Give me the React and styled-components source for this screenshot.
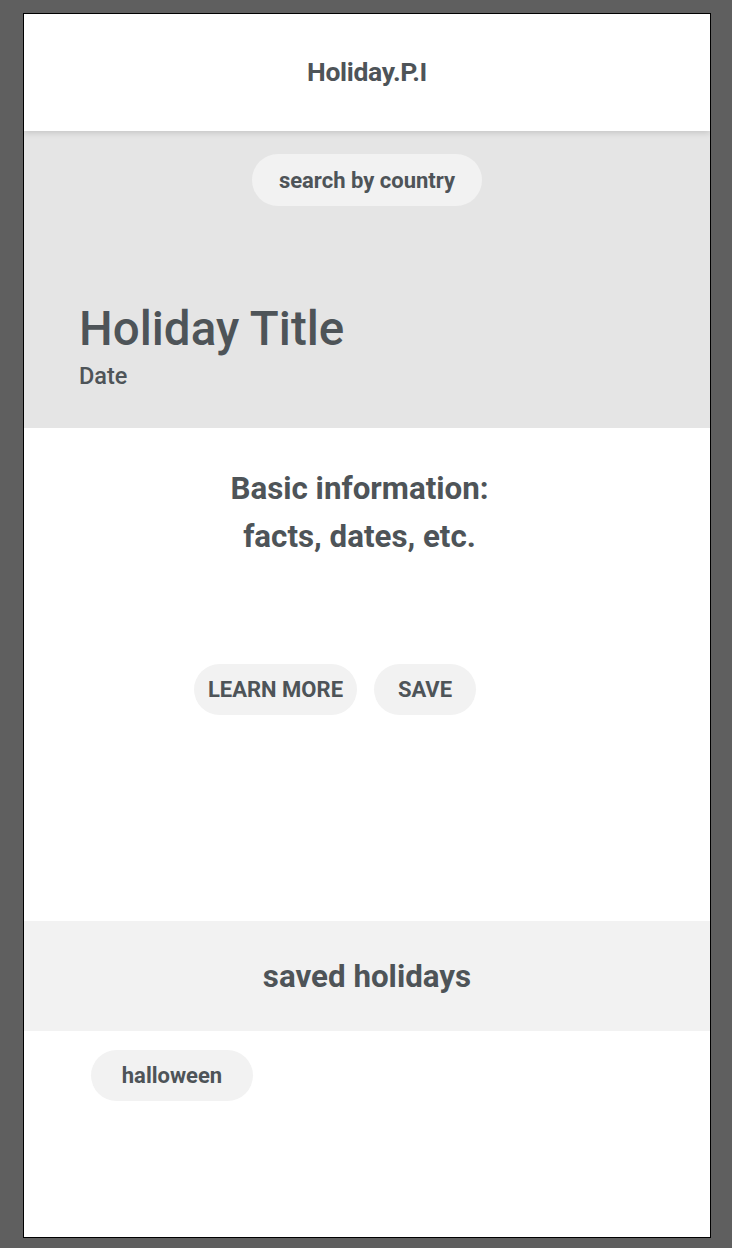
import styled, { createGlobalStyle } from "styled-components";

const GlobalStyle = createGlobalStyle`
  html, body {
    margin: 0;
    padding: 0;
    background: #5f5f5f;
  }
  body {
    font-family: Roboto, "Noto Sans", sans-serif;
    color: #4e5458;
  }
`;

export default function App() {
  return (
    <>
      <GlobalStyle />
      <Frame>
        <Header>
          <Logo>Holiday.P.I</Logo>
        </Header>
        <Hero>
          <Pill $w={230} $h={52}>search by country</Pill>
          <TitleBlock>
            <Title>Holiday Title</Title>
            <DateText>Date</DateText>
          </TitleBlock>
        </Hero>
        <Info>
          <InfoText>
            Basic information:
            <br />
            facts, dates, etc.
          </InfoText>
          <Actions>
            <ActionButton $w={163}>LEARN MORE</ActionButton>
            <ActionButton $w={102}>SAVE</ActionButton>
          </Actions>
        </Info>
        <SavedBand>
          <SavedTitle>saved holidays</SavedTitle>
        </SavedBand>
        <SavedList>
          <Pill $w={162} $h={51}>halloween</Pill>
        </SavedList>
      </Frame>
    </>
  );
}

const Frame = styled.div`
  box-sizing: border-box;
  width: 688px;
  height: 1225px;
  margin: 13px 0 0 23px;
  border: 1px solid #000;
  background: #fff;
  display: flex;
  flex-direction: column;
  overflow: hidden;
`;

const Header = styled.header`
  position: relative;
  z-index: 1;
  height: 117px;
  display: flex;
  align-items: center;
  justify-content: center;
  background: #fff;
  box-shadow: 0 2px 6px rgba(0, 0, 0, 0.14);
`;

const Logo = styled.h1`
  margin: 0;
  font-size: 26.5px;
  font-weight: 700;
  letter-spacing: -0.3px;
  transform: translateY(-1px);
`;

const Hero = styled.section`
  height: 297px;
  box-sizing: border-box;
  padding-top: 23px;
  background: #e5e5e5;
  display: flex;
  flex-direction: column;
  align-items: center;
`;

const Pill = styled.div`
  box-sizing: border-box;
  width: ${(p) => p.$w}px;
  height: ${(p) => p.$h}px;
  border-radius: 26px;
  background: #f2f2f2;
  display: flex;
  align-items: center;
  justify-content: center;
  font-size: 22px;
  font-weight: 700;
  white-space: nowrap;
`;

const TitleBlock = styled.div`
  align-self: stretch;
  padding: 97px 0 0 55px;
`;

const Title = styled.h2`
  margin: 0;
  font-size: 47.5px;
  font-weight: 500;
  line-height: 52px;
`;

const DateText = styled.div`
  font-size: 23.5px;
  font-weight: 500;
  line-height: 28px;
  margin-top: 7px;
`;

const Info = styled.section`
  height: 493px;
  box-sizing: border-box;
  padding-top: 37px;
  display: flex;
  flex-direction: column;
  align-items: center;
`;

const InfoText = styled.p`
  margin: 0;
  padding-right: 15px;
  text-align: center;
  font-size: 31.3px;
  font-weight: 700;
  line-height: 48px;
`;

const Actions = styled.div`
  display: flex;
  gap: 17px;
  margin-top: 103px;
  padding-right: 64px;
`;

const ActionButton = styled.button`
  all: unset;
  box-sizing: border-box;
  width: ${(p) => p.$w}px;
  height: 51px;
  border-radius: 26px;
  background: #f2f2f2;
  text-align: center;
  font-family: Roboto, sans-serif;
  font-size: 22px;
  font-weight: 700;
  line-height: 51px;
  color: #4e5458;
  cursor: pointer;
`;

const SavedBand = styled.section`
  height: 110px;
  background: #f2f2f2;
  display: flex;
  align-items: center;
  justify-content: center;
`;

const SavedTitle = styled.h3`
  margin: 0;
  font-size: 31.3px;
  font-weight: 700;
`;

const SavedList = styled.section`
  flex: 1;
  padding: 19px 0 0 67px;
`;
